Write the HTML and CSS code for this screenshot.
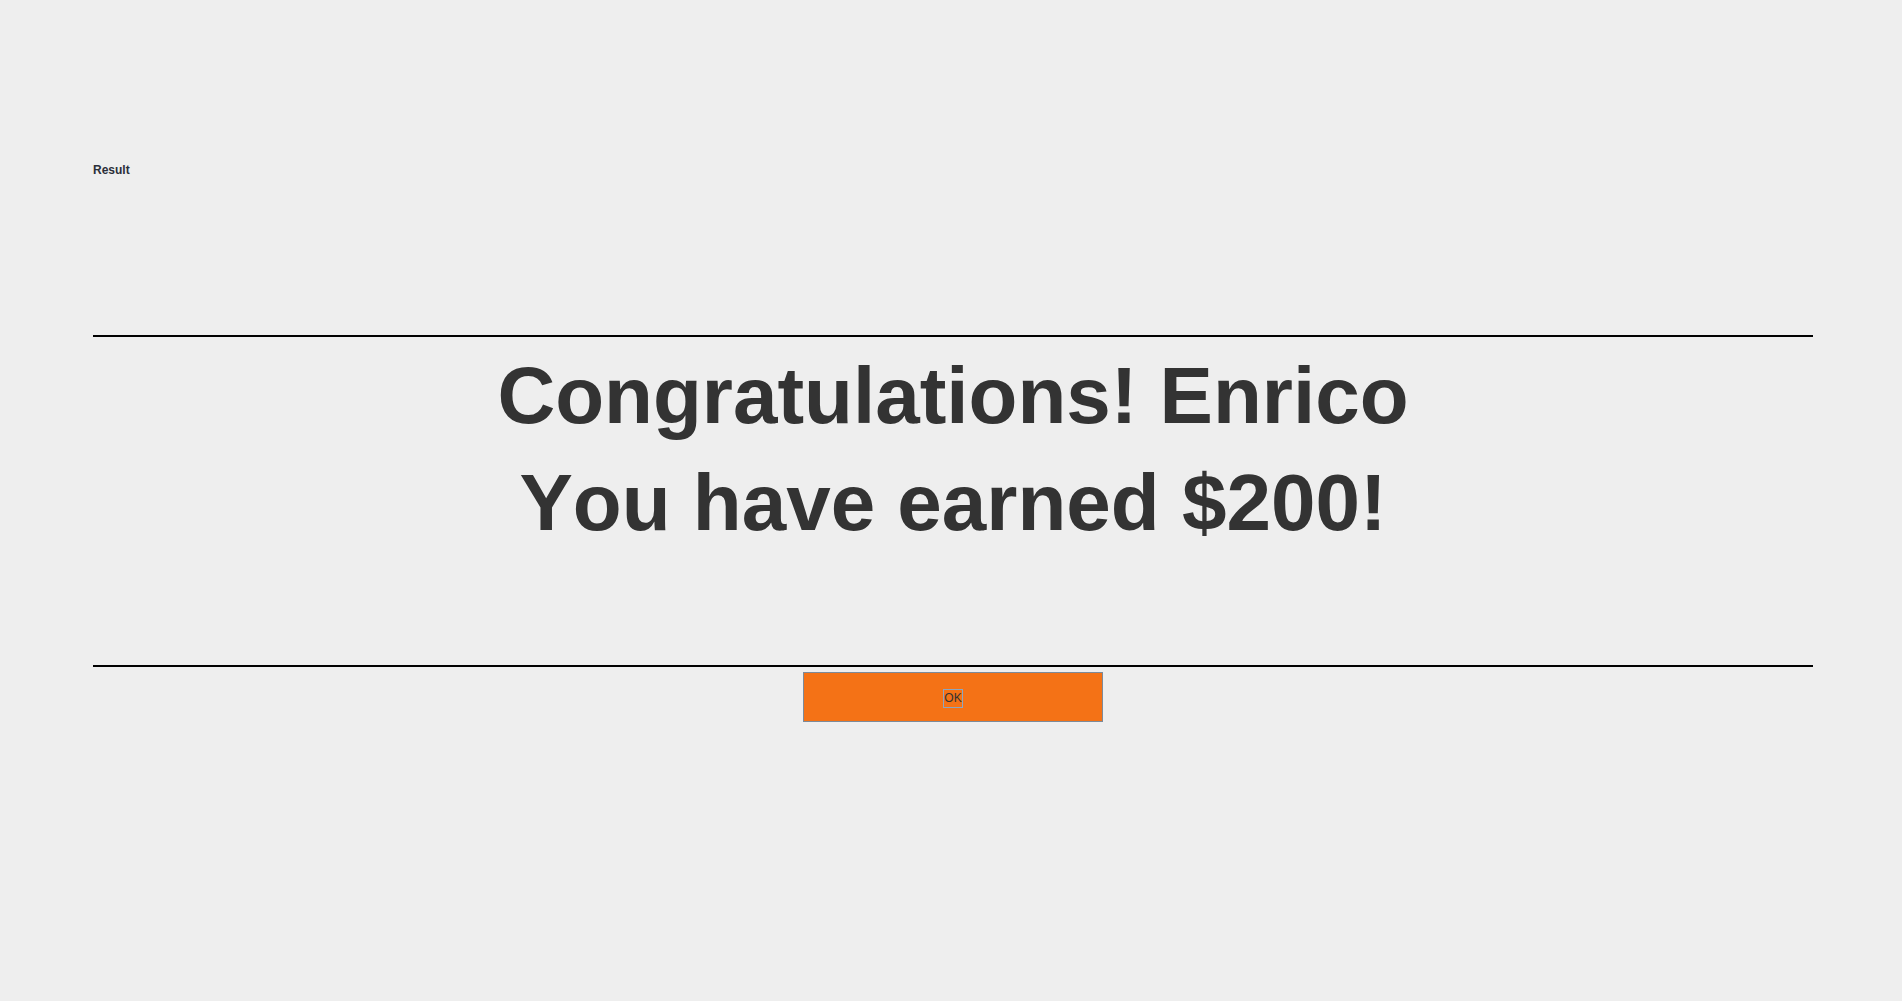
FILE: index.html
```html
<!DOCTYPE html>
<html>
<head>
<meta charset="utf-8">
<link rel="stylesheet" href="styles.css">
</head>
<body>
<div class="panel">
  <div class="title">Result</div>
  <div class="rule"></div>
  <div class="message">
    <div class="line">Congratulations! Enrico</div>
    <div class="line">You have earned $200!</div>
  </div>
  <div class="rule rule-bottom"></div>
  <div class="actions">
    <button class="ok"><span class="ok-label">OK</span></button>
  </div>
</div>
</body>
</html>
```
FILE: styles.css
```css
html, body {
  margin: 0;
  padding: 0;
  background: #eeeeee;
}
body {
  font-family: "Liberation Sans", Arial, sans-serif;
  color: #333333;
  font-kerning: none;
}
.panel {
  padding: 163px 89px 0 93px;
  display: flex;
  flex-direction: column;
}
.title {
  font-size: 12px;
  font-weight: bold;
  line-height: 14px;
  color: #2b2f3a;
}
.rule {
  margin-top: 158px;
  border-top: 2px solid #000000;
  height: 0;
}
.message {
  margin-top: 5px;
  text-align: center;
  font-size: 80px;
  font-weight: bold;
  line-height: 107px;
  color: #333333;
}
.rule-bottom {
  margin-top: 109px;
}
.actions {
  margin-top: 5px;
  display: flex;
  justify-content: center;
}
.ok {
  width: 300px;
  height: 50px;
  box-sizing: border-box;
  background: #f47216;
  border: 1px solid #7d8a99;
  margin: 0;
  padding: 2px 0 0 0;
  display: flex;
  align-items: center;
  justify-content: center;
  font-family: "Liberation Sans", Arial, sans-serif;
  font-size: 12px;
  color: #333333;
  font-kerning: none;
}
.ok-label {
  display: inline-block;
  border: 1px solid #8ea6bf;
  line-height: 17px;
  padding: 0;
}
```
